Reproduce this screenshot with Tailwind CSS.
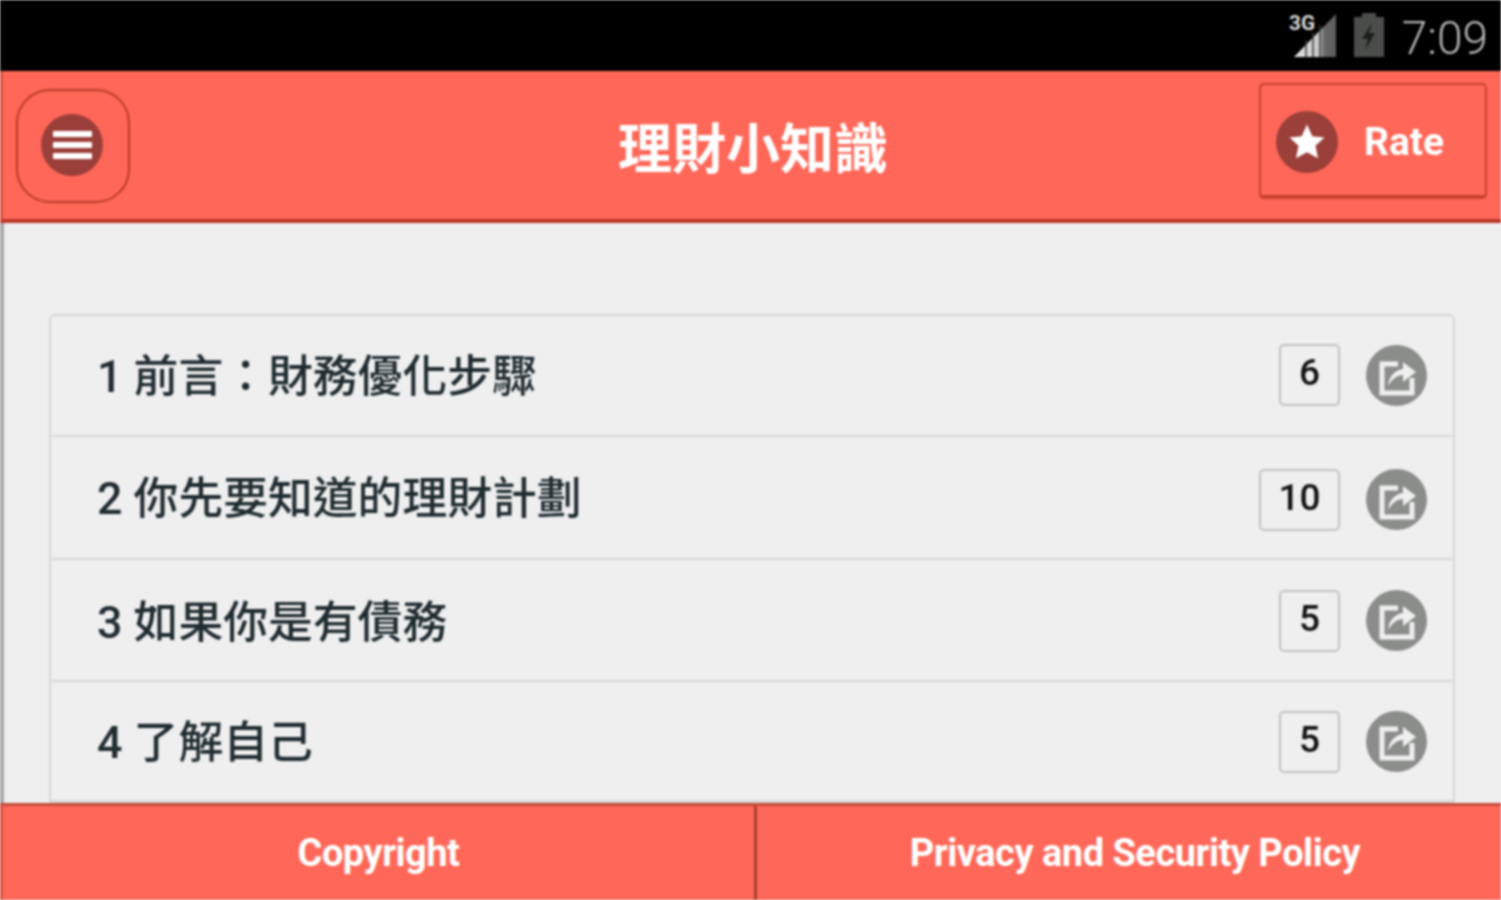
<!DOCTYPE html>
<html lang="zh-Hant">
<head>
    <meta charset="UTF-8">
    <meta name="viewport" content="width=device-width, initial-scale=1.0">
    <title>理財小知識</title>
    <script src="https://cdn.jsdelivr.net/npm/@tailwindcss/browser@4"></script>
</head>
<body class="bg-[#efefef] overflow-hidden">
<div class="flex flex-col w-[1501px] h-[900px] overflow-hidden blur-[0.8px] font-['Roboto','Noto_Sans_CJK_TC',sans-serif]">
    <!-- Status bar -->
    <div class="h-[71px] shrink-0 bg-black flex items-center justify-end pr-[13px]">
        <svg class="w-[50px] h-[50px] mt-[-2px] mr-[15px]" viewBox="0 0 50 50">
            <defs>
                <linearGradient id="sig" x1="0" x2="1" y1="0" y2="0">
                    <stop offset="0" stop-color="#e4e4e4"/>
                    <stop offset="0.6" stop-color="#c8c8c8"/>
                    <stop offset="0.72" stop-color="#666"/>
                    <stop offset="1" stop-color="#5c5c5c"/>
                </linearGradient>
            </defs>
            <path d="M5 47 L47 4 V47 Z" fill="url(#sig)"/>
            <path d="M17 47V30M24 47V22M31 47V15" stroke="#3a3a3a" stroke-width="1.5"/>
            <text x="0" y="20" fill="#d8d8d8" font-size="20" font-weight="700" font-family="Roboto" textLength="26" lengthAdjust="spacingAndGlyphs">3G</text>
        </svg>
        <svg class="w-[30px] h-[44px] mt-[-2px] mr-[18px]" viewBox="0 0 30 44">
            <path d="M8 0H22V4H30V44H0V4H8Z" fill="#4a4d4a"/>
            <path d="M18 10L8 26H14L11 37L21 20H15Z" fill="#1b1c1b"/>
        </svg>
        <span class="text-[46px] leading-none text-[#b4b4b4] font-light mt-[5px]">7:09</span>
    </div>

    <!-- Header -->
    <header class="h-[152px] shrink-0 bg-[#ff6758] border-b-[4px] border-b-[#bb3626] border-l-[3px] border-l-[#d9503f] flex items-center justify-between pl-[13px] pr-[14px] relative">
        <button class="w-[114px] h-[114px] mt-[2px] rounded-[34px] border-2 border-[#b83a2a] flex items-center justify-center pb-[2px] pr-[2px]">
            <span class="w-[62px] h-[62px] rounded-full bg-[#9b3f3a] flex flex-col items-center justify-center gap-[5px]">
                <span class="w-[39px] h-[6px] bg-white rounded-[1px]"></span>
                <span class="w-[39px] h-[6px] bg-white rounded-[1px]"></span>
                <span class="w-[39px] h-[6px] bg-white rounded-[1px]"></span>
            </span>
        </button>
        <h1 class="absolute left-[615px] top-[46px] text-[54px] leading-[68px] font-bold text-white whitespace-nowrap">理財小知識</h1>
        <button class="w-[228px] h-[116px] mt-[-9px] rounded-[5px] border-2 border-[#c9402f] border-b-[4px] flex items-center pl-[15px] pt-[4px] gap-[26px]">
            <span class="w-[62px] h-[62px] rounded-full bg-[#9b3f3a] flex items-center justify-center">
                <svg class="w-[40px] h-[40px]" viewBox="0 0 24 24"><path d="M12 1.5l3.2 7 7.3.8-5.4 5 1.5 7.5L12 18.1l-6.6 3.7 1.5-7.5-5.4-5 7.3-.8z" fill="#fff"/></svg>
            </span>
            <span class="text-[39px] leading-none font-bold text-white mt-[2px]">Rate</span>
        </button>
    </header>

    <!-- Chapter list -->
    <main class="flex-1 min-h-0 overflow-hidden border-l-[4px] border-l-[#a8a8a8] pt-[91px] pl-[45px] pr-[46px]">
        <ul class="border-2 border-[#d8d8d8] rounded-t-[6px] text-[#1f2b30]">
            <li class="h-[121px] border-b-2 border-[#d8d8d8] flex items-center pl-[46px] pr-[26px]">
                <span class="flex-1 text-[44.8px] font-medium leading-none whitespace-nowrap mt-[4px]">1 前言：財務優化步驟</span>
                <span class="w-[61px] h-[62px] mt-[-2px] pb-[3px] border-2 border-[#c2c2c2] rounded-[5px] flex items-center justify-center text-[37px] font-medium text-[#111]">6</span>
                <span class="ml-[26px] w-[61px] h-[61px] rounded-full bg-[#8b8d8b] flex items-center justify-center">
                    <svg class="w-[46px] h-[46px]" viewBox="0 0 46 46" fill="none"><path d="M24 11H8V40H38V25" stroke="#efefef" stroke-width="5"/><path d="M14 33C15 23 21 17 29 16V9L42 19L29 29V22C23 22 18 26 14 33Z" fill="#efefef"/></svg>
                </span>
            </li>
            <li class="h-[123px] border-b-2 border-[#d8d8d8] flex items-center pl-[46px] pr-[26px]">
                <span class="flex-1 text-[44.8px] font-medium leading-none whitespace-nowrap mt-[4px]">2 你先要知道的理財計劃</span>
                <span class="w-[81px] h-[62px] mt-[4px] pb-[4px] border-2 border-[#c2c2c2] rounded-[5px] flex items-center justify-center text-[37px] font-medium text-[#111]">10</span>
                <span class="ml-[26px] mt-[4px] w-[61px] h-[61px] rounded-full bg-[#8b8d8b] flex items-center justify-center">
                    <svg class="w-[46px] h-[46px]" viewBox="0 0 46 46" fill="none"><path d="M24 11H8V40H38V25" stroke="#efefef" stroke-width="5"/><path d="M14 33C15 23 21 17 29 16V9L42 19L29 29V22C23 22 18 26 14 33Z" fill="#efefef"/></svg>
                </span>
            </li>
            <li class="h-[122px] border-b-2 border-[#d8d8d8] flex items-center pl-[46px] pr-[26px]">
                <span class="flex-1 text-[44.8px] font-medium leading-none whitespace-nowrap mt-[6px]">3 如果你是有債務</span>
                <span class="w-[61px] h-[62px] mt-[1px] pb-[3px] border-2 border-[#c2c2c2] rounded-[5px] flex items-center justify-center text-[37px] font-medium text-[#111]">5</span>
                <span class="ml-[26px] w-[61px] h-[61px] rounded-full bg-[#8b8d8b] flex items-center justify-center">
                    <svg class="w-[46px] h-[46px]" viewBox="0 0 46 46" fill="none"><path d="M24 11H8V40H38V25" stroke="#efefef" stroke-width="5"/><path d="M14 33C15 23 21 17 29 16V9L42 19L29 29V22C23 22 18 26 14 33Z" fill="#efefef"/></svg>
                </span>
            </li>
            <li class="h-[120px] border-b-2 border-[#d8d8d8] flex items-center pl-[46px] pr-[26px]">
                <span class="flex-1 text-[44.8px] font-medium leading-none whitespace-nowrap mt-[4px]">4 了解自己</span>
                <span class="w-[61px] h-[62px] mt-[1px] pb-[3px] border-2 border-[#c2c2c2] rounded-[5px] flex items-center justify-center text-[37px] font-medium text-[#111]">5</span>
                <span class="ml-[26px] w-[61px] h-[61px] rounded-full bg-[#8b8d8b] flex items-center justify-center">
                    <svg class="w-[46px] h-[46px]" viewBox="0 0 46 46" fill="none"><path d="M24 11H8V40H38V25" stroke="#efefef" stroke-width="5"/><path d="M14 33C15 23 21 17 29 16V9L42 19L29 29V22C23 22 18 26 14 33Z" fill="#efefef"/></svg>
                </span>
            </li>
        </ul>
    </main>

    <!-- Footer -->
    <footer class="h-[97px] shrink-0 bg-[#ff6758] border-t-[3px] border-t-[#c44a3a] border-l-[3px] border-l-[#d9503f] flex text-white font-bold text-[38px]">
        <a class="w-[754px] flex items-center justify-center border-r-[3px] border-r-[#a8402f] pt-[1px] tracking-[-0.5px]">Copyright</a>
        <a class="flex-1 flex items-center justify-center pt-[1px] pl-[12px] tracking-[-0.5px]">Privacy and Security Policy</a>
    </footer>
</div>
</body>
</html>
